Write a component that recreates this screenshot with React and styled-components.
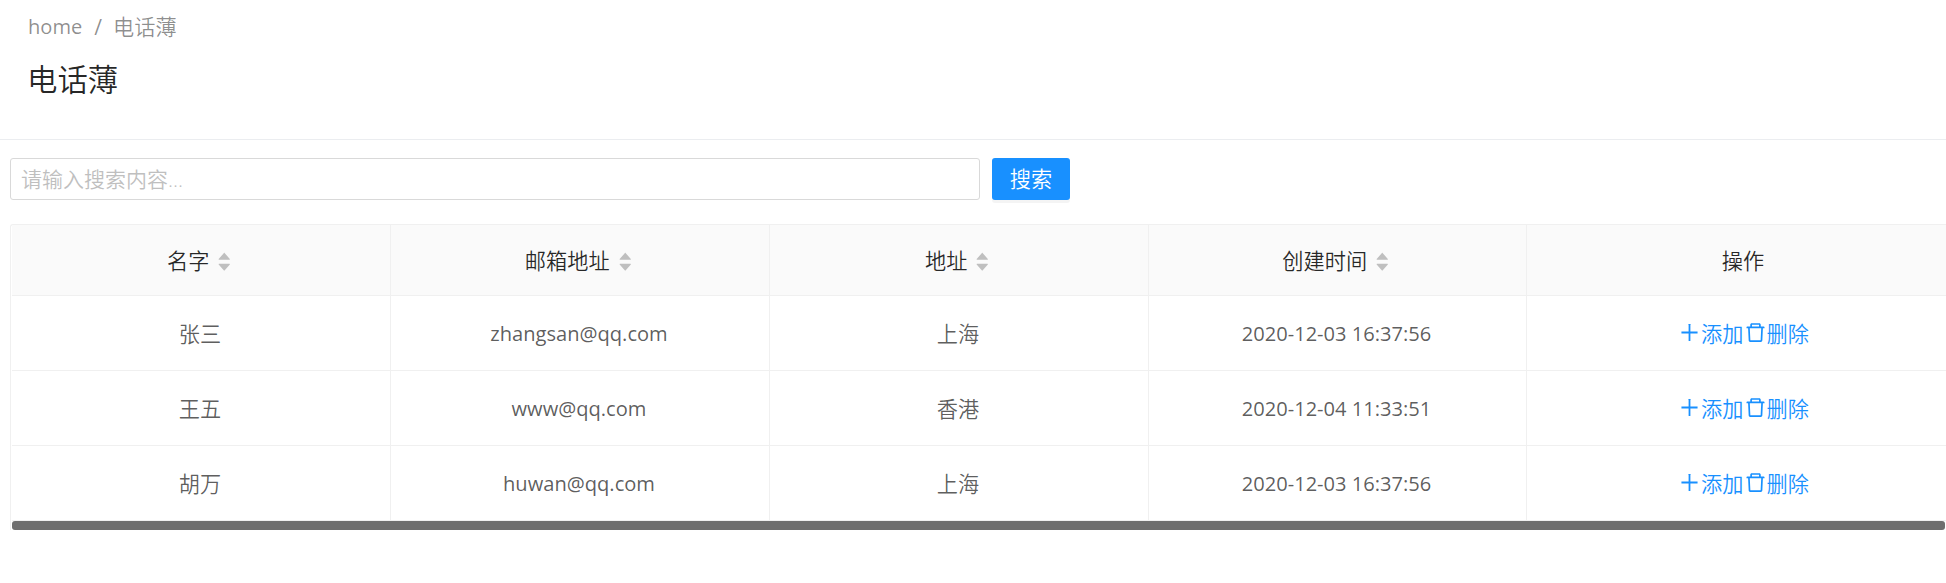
import React from "react";
import styled, { createGlobalStyle } from "styled-components";
import { AiFillCaretDown, AiFillCaretUp, AiOutlineDelete } from "react-icons/ai";

const GlobalStyle = createGlobalStyle`
  *, *::before, *::after { box-sizing: border-box; }
  body {
    margin: 0;
    overflow: hidden;
    background: #fff;
    color: rgba(0, 0, 0, 0.65);
    font-family: "Open Sans", "Noto Sans CJK SC", sans-serif;
    font-size: 21.2px;
    font-weight: 350;
    line-height: 32px;
  }
`;

const Page = styled.div`
  width: 100%;
  height: 583px;
  overflow: hidden;
`;

const PageHeader = styled.header`
  height: 140px;
  padding: 11px 27px 0;
  border-bottom: 1px solid #ebedf0;
`;

const Breadcrumb = styled.nav`
  display: flex;
  height: 32px;
  padding-left: 1px;
  color: rgba(0, 0, 0, 0.45);
`;

const Separator = styled.span`
  margin: 0 11px 0 12px;
  font-weight: 400;
`;

const Latin = styled.span`
  font-size: 20.1px;
  font-weight: 400;
`;

const Title = styled.h1`
  margin: 14px 0 0;
  color: rgba(0, 0, 0, 0.85);
  font-size: 30.4px;
  font-weight: 350;
  line-height: 45px;
`;

const SearchBar = styled.form`
  display: flex;
  gap: 12px;
  padding: 18px 10px 24px;
`;

const SearchInput = styled.input`
  width: 970px;
  height: 42px;
  padding: 0 10px;
  border: 1px solid #d9d9d9;
  border-radius: 3px;
  outline: none;
  font: inherit;
  font-size: 21px;
  &::placeholder {
    color: #bfbfbf;
    opacity: 1;
  }
`;

const SearchButton = styled.button`
  width: 78px;
  height: 42px;
  padding: 0;
  border: 0;
  border-radius: 3px;
  background: #1890ff;
  box-shadow: 0 3px 0 rgba(0, 0, 0, 0.045);
  color: #fff;
  font: inherit;
  line-height: 42px;
`;

const TableFrame = styled.div`
  width: 1960px;
  height: 306px;
  margin-left: 10px;
  padding-left: 1px;
  border: 1px solid #f0f0f0;
  border-width: 1px 0 0 1px;
  border-radius: 3px 0 0 0;
`;

const Row = styled.div`
  display: grid;
  grid-template-columns: 379px 379px 379px 378px 437px;
  height: ${(p) => (p.$head ? 71 : 75)}px;
  background: ${(p) => (p.$head ? "#fafafa" : "#fff")};
  color: ${(p) => (p.$head ? "rgba(0, 0, 0, 0.85)" : "inherit")};
`;

const Cell = styled.div`
  display: flex;
  align-items: center;
  justify-content: center;
  padding: 2px ${(p) => (p.$action ? 4 : 2)}px 0 0;
  border-right: 1px solid #f0f0f0;
  border-bottom: 1px solid #f0f0f0;
`;

const Sorter = styled.span`
  display: flex;
  flex-direction: column;
  margin-left: 7px;
  padding-top: 1px;
  color: #bfbfbf;
  svg {
    display: block;
    width: 16.5px;
    height: 16.5px;
  }
  svg + svg {
    margin-top: -5px;
  }
`;

const Action = styled.a`
  display: flex;
  align-items: center;
  color: #1890ff;
  svg {
    width: 21px;
    height: 21px;
    margin: 0 1px 4px 0;
  }
  & + & {
    margin-left: 1px;
  }
`;

const ScrollThumb = styled.div`
  width: 1933px;
  height: 9px;
  border-radius: 3px;
  background: #6e6e6e;
`;

const PlusIcon = () => (
  <svg viewBox="64 64 896 896" fill="currentColor">
    <path d="M482 152h60q8 0 8 8v704q0 8-8 8h-60q-8 0-8-8V160q0-8 8-8z" />
    <path d="M176 474h672q8 0 8 8v60q0 8-8 8H176q-8 0-8-8v-60q0-8 8-8z" />
  </svg>
);

const columns = ["名字", "邮箱地址", "地址", "创建时间"];

const contacts = [
  { name: "张三", email: "zhangsan@qq.com", city: "上海", created: "2020-12-03 16:37:56" },
  { name: "王五", email: "www@qq.com", city: "香港", created: "2020-12-04 11:33:51" },
  { name: "胡万", email: "huwan@qq.com", city: "上海", created: "2020-12-03 16:37:56" },
];

export default function App() {
  return (
    <Page>
      <GlobalStyle />
      <PageHeader>
        <Breadcrumb>
          <Latin>home</Latin>
          <Separator>/</Separator>
          <span>电话薄</span>
        </Breadcrumb>
        <Title>电话薄</Title>
      </PageHeader>
      <SearchBar>
        <SearchInput placeholder="请输入搜索内容..." />
        <SearchButton type="button">搜索</SearchButton>
      </SearchBar>
      <TableFrame>
        <Row $head>
          {columns.map((label) => (
            <Cell key={label}>
              {label}
              <Sorter>
                <AiFillCaretUp />
                <AiFillCaretDown />
              </Sorter>
            </Cell>
          ))}
          <Cell $action>操作</Cell>
        </Row>
        {contacts.map((c) => (
          <Row key={c.name}>
            <Cell>{c.name}</Cell>
            <Cell><Latin>{c.email}</Latin></Cell>
            <Cell>{c.city}</Cell>
            <Cell><Latin>{c.created}</Latin></Cell>
            <Cell>
              <Action><PlusIcon />添加</Action>
              <Action><AiOutlineDelete viewBox="64 64 896 896" />删除</Action>
            </Cell>
          </Row>
        ))}
        <ScrollThumb />
      </TableFrame>
    </Page>
  );
}
